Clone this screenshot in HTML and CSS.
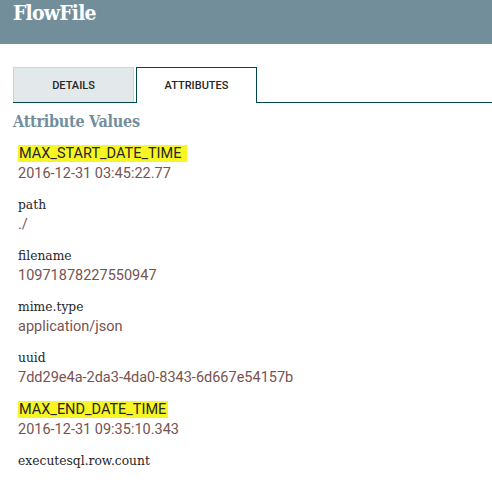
FILE: index.html
```html
<!DOCTYPE html>
<html>
<head>
<meta charset="utf-8">
<link rel="stylesheet" href="styles.css">
</head>
<body>
<header class="header"><h1 class="title">FlowFile</h1></header>
<div class="tabs">
  <div class="tab">DETAILS</div>
  <div class="tab active">ATTRIBUTES</div>
</div>
<h2 class="section">Attribute Values</h2>
<div class="attrs">
  <div class="attr"><div class="name"><span class="hl hl-start">MAX_START_DATE_TIME</span></div><div class="value">2016-12-31 03:45:22.77</div></div>
  <div class="attr"><div class="name">path</div><div class="value">./</div></div>
  <div class="attr"><div class="name">filename</div><div class="value">10971878227550947</div></div>
  <div class="attr"><div class="name">mime.type</div><div class="value">application/json</div></div>
  <div class="attr"><div class="name">uuid</div><div class="value">7dd29e4a-2da3-4da0-8343-6d667e54157b</div></div>
  <div class="attr"><div class="name"><span class="hl hl-end">MAX_END_DATE_TIME</span></div><div class="value">2016-12-31 09:35:10.343</div></div>
  <div class="attr"><div class="name">executesql.row.count</div></div>
</div>
</body>
</html>
```
FILE: styles.css
```css
html, body { margin: 0; padding: 0; background: #fff; }
body { font-family: Roboto, "Liberation Sans", sans-serif; overflow: hidden; }
.header { height: 44px; background: #728e9b; padding: 0 13px; box-sizing: border-box; }
.title { margin: 0; padding-top: 0; font-family: "DejaVu Serif Condensed", "DejaVu Serif", serif; font-weight: bold; font-size: 21px; line-height: 26px; color: #fff; letter-spacing: -0.8px; }
.tabs { display: flex; gap: 2px; margin: 23px 0 0 13px; border-bottom: 1px solid #004849; height: 35px; }
.tab { width: 121px; height: 35px; box-sizing: border-box; display: flex; align-items: center; justify-content: center; font-size: 11px; font-weight: 500; color: #262626; background: #e3e8eb; border: 1px solid #ccd3d6; border-bottom: none; }
.tab.active { background: #fff; border: 1px solid #004849; border-bottom: none; height: 36px; }
.section { margin: 9px 0 0 13px; font-family: "DejaVu Serif Condensed", "DejaVu Serif", serif; font-weight: bold; font-size: 16px; line-height: 20px; color: #728e9b; letter-spacing: -0.25px; }
.attrs { display: flex; flex-direction: column; gap: 13px; margin: 12px 0 0 18px; }
.attr { display: flex; flex-direction: column; }
.name { font-family: "DejaVu Serif", serif; font-size: 12.3px; line-height: 19px; color: #262626; }
.name .hl { font-family: Roboto, sans-serif; font-size: 14.5px; background: #f7f524; padding: 0 6px 0 1px; }
.name .hl-end { padding-right: 2px; }
.value { font-size: 14.5px; line-height: 19px; color: #775351; }
```
